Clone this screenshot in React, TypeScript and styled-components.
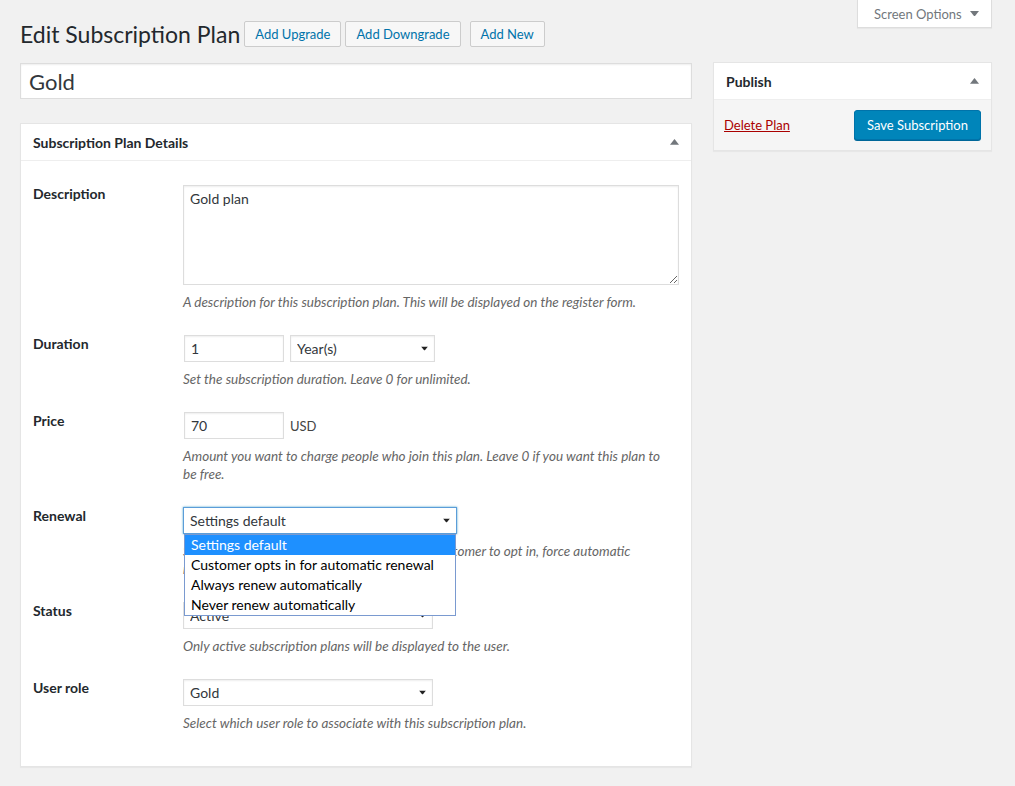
import React from 'react';
import styled, { createGlobalStyle } from 'styled-components';

const GlobalStyle = createGlobalStyle`
  * { box-sizing: border-box; }
  body {
    margin: 0;
    background: #f1f1f1;
    color: #444;
    font-family: Lato, "Liberation Sans", sans-serif;
    font-size: 13px;
  }
`;

const font = `Lato, "Liberation Sans", sans-serif`;

function Caret({ up, color = '#32373c', size = 8 }: { up?: boolean; color?: string; size?: number }) {
  return (
    <svg width={size} height={size * 0.625} viewBox="0 0 8 5" aria-hidden>
      <path d={up ? 'M0 5 L4 0 L8 5 Z' : 'M0 0 L8 0 L4 5 Z'} fill={color} />
    </svg>
  );
}

const Page = styled.div`
  width: 1015px;
  padding: 0 23px 20px 20px;
`;

const TopRow = styled.div`
  display: flex;
  justify-content: space-between;
  align-items: flex-start;
`;

const TitleGroup = styled.div`
  display: flex;
  align-items: center;
  padding-top: 21px;
`;

const PageTitle = styled.h1`
  margin: 0 4px 0 0;
  font-family: ${font};
  font-size: 23px;
  font-weight: 400;
  line-height: 26px;
  color: #23282d;
`;

const TitleAction = styled.button<{ $gap: number }>`
  height: 26px;
  margin-left: ${p => p.$gap}px;
  padding: 0 10px;
  border: 1px solid #ccc;
  border-radius: 2px;
  background: #f7f7f7;
  color: #0073aa;
  font-family: ${font};
  font-size: 13px;
  cursor: pointer;
`;

const ScreenOptions = styled.div`
  display: flex;
  align-items: center;
  gap: 8px;
  width: 135px;
  height: 28px;
  padding-left: 16px;
  background: #fff;
  border: 1px solid #ddd;
  border-top: none;
  box-shadow: 0 1px 1px rgba(0, 0, 0, 0.04);
  color: #72777c;
  font-size: 13px;
`;

const Columns = styled.div`
  display: grid;
  grid-template-columns: 672px 279px;
  column-gap: 21px;
  margin-top: 15px;
  align-items: start;
`;

const MainColumn = styled.div`
  padding-top: 1px;
`;

const TitleInput = styled.input`
  display: block;
  width: 100%;
  height: 36px;
  padding: 2px 8px;
  border: 1px solid #ddd;
  box-shadow: inset 0 1px 2px rgba(0, 0, 0, 0.07);
  background: #fff;
  color: #32373c;
  font-family: ${font};
  font-size: 22px;
  outline: none;
`;

const Postbox = styled.div<{ $top?: number }>`
  margin-top: ${p => p.$top ?? 0}px;
  background: #fff;
  border: 1px solid #e5e5e5;
  box-shadow: 0 1px 1px rgba(0, 0, 0, 0.04);
`;

const PostboxHeader = styled.div`
  display: flex;
  align-items: center;
  justify-content: space-between;
  height: 37px;
  padding: 0 12px;
  border-bottom: 1px solid #eee;
  color: #23282d;
  font-size: 14px;
  font-weight: 700;
`;

const PostboxBody = styled.div`
  padding: 24px 12px 34px;
`;

const FieldRow = styled.div<{ $last?: boolean }>`
  display: grid;
  grid-template-columns: 150px 1fr;
  margin-bottom: ${p => (p.$last ? 0 : 24)}px;
`;

const FieldLabel = styled.label`
  color: #23282d;
  font-size: 14px;
  font-weight: 700;
  line-height: 18px;
`;

const FieldBody = styled.div`
  position: relative;
`;

const Controls = styled.div`
  display: flex;
  align-items: center;
  gap: 6px;
  position: relative;
`;

const Help = styled.p`
  margin: 8px 0 0;
  color: #666;
  font-size: 13.5px;
  font-style: italic;
  line-height: 18px;
`;

const TextArea = styled.textarea`
  display: block;
  width: 100%;
  height: 100px;
  padding: 4px 6px;
  border: 1px solid #ddd;
  box-shadow: inset 0 1px 2px rgba(0, 0, 0, 0.07);
  color: #32373c;
  font-family: ${font};
  font-size: 14px;
  line-height: 18px;
  outline: none;
`;

const TextInput = styled.input<{ $width: number }>`
  width: ${p => p.$width}px;
  height: 27px;
  margin-left: 1px;
  padding: 2px 6px;
  border: 1px solid #ddd;
  box-shadow: inset 0 1px 2px rgba(0, 0, 0, 0.07);
  color: #32373c;
  font-family: ${font};
  font-size: 14px;
  outline: none;
`;

const Unit = styled.span`
  color: #444;
  font-size: 13px;
`;

const SelectWrap = styled.div<{ $width: number }>`
  position: relative;
  width: ${p => p.$width}px;
  height: 27px;
`;

const SelectBox = styled.select<{ $focused?: boolean }>`
  appearance: none;
  width: 100%;
  height: 100%;
  padding: 2px 24px 2px 6px;
  border: 1px solid ${p => (p.$focused ? '#5b9dd9' : '#ddd')};
  box-shadow: ${p => (p.$focused ? '0 0 2px rgba(30, 140, 190, 0.8)' : 'inset 0 1px 2px rgba(0, 0, 0, 0.07)')};
  background: #fff;
  color: #32373c;
  font-family: ${font};
  font-size: 14px;
  outline: none;
`;

const SelectArrow = styled.span`
  position: absolute;
  right: 7px;
  top: 50%;
  transform: translateY(-60%);
  display: flex;
  pointer-events: none;
`;

const OptionList = styled.ul`
  position: absolute;
  top: 100%;
  left: 1px;
  z-index: 2;
  width: 272px;
  margin: 0;
  padding: 0;
  list-style: none;
  background: #fff;
  border: 1px solid #7a9ad0;
`;

const OptionItem = styled.li<{ $active?: boolean }>`
  height: 20px;
  padding: 0 6px;
  line-height: 20px;
  font-size: 14px;
  color: ${p => (p.$active ? '#fff' : '#000')};
  background: ${p => (p.$active ? '#1e90ff' : 'transparent')};
`;

const PublishBody = styled.div`
  display: flex;
  align-items: center;
  justify-content: space-between;
  padding: 10px;
  background: #f5f5f5;
`;

const DeleteLink = styled.a`
  color: #a00;
  font-size: 13px;
  text-decoration: underline;
  cursor: pointer;
`;

const PrimaryButton = styled.button`
  height: 30px;
  padding: 0 12px;
  border: 1px solid #0073aa;
  border-radius: 3px;
  background: #0085ba;
  box-shadow: 0 1px 0 #006799;
  color: #fff;
  font-family: ${font};
  font-size: 13px;
  cursor: pointer;
`;

function Select({ width, value, options, open }: { width: number; value: string; options: string[]; open?: boolean }) {
  return (
    <SelectWrap $width={width}>
      <SelectBox $focused={open} defaultValue={value}>
        {options.map(o => <option key={o}>{o}</option>)}
      </SelectBox>
      <SelectArrow><Caret color="#222" size={7} /></SelectArrow>
      {open && (
        <OptionList>
          {options.map(o => <OptionItem key={o} $active={o === value}>{o}</OptionItem>)}
        </OptionList>
      )}
    </SelectWrap>
  );
}

const renewalOptions = [
  'Settings default',
  'Customer opts in for automatic renewal',
  'Always renew automatically',
  'Never renew automatically',
];

export default function App() {
  return (
    <Page>
      <GlobalStyle />
      <TopRow>
        <TitleGroup>
          <PageTitle>Edit Subscription Plan</PageTitle>
          <TitleAction $gap={0}>Add Upgrade</TitleAction>
          <TitleAction $gap={4}>Add Downgrade</TitleAction>
          <TitleAction $gap={9}>Add New</TitleAction>
        </TitleGroup>
        <ScreenOptions>
          Screen Options <Caret color="#72777c" size={9} />
        </ScreenOptions>
      </TopRow>

      <Columns>
        <MainColumn>
          <TitleInput defaultValue="Gold" />
          <Postbox $top={24}>
            <PostboxHeader>
              Subscription Plan Details
              <Caret up color="#72777c" size={9} />
            </PostboxHeader>
            <PostboxBody>
              <FieldRow>
                <FieldLabel>Description</FieldLabel>
                <FieldBody>
                  <TextArea defaultValue="Gold plan" />
                  <Help>A description for this subscription plan. This will be displayed on the register form.</Help>
                </FieldBody>
              </FieldRow>

              <FieldRow>
                <FieldLabel>Duration</FieldLabel>
                <FieldBody>
                  <Controls>
                    <TextInput $width={100} defaultValue="1" />
                    <Select width={145} value="Year(s)" options={['Day(s)', 'Week(s)', 'Month(s)', 'Year(s)']} />
                  </Controls>
                  <Help>Set the subscription duration. Leave 0 for unlimited.</Help>
                </FieldBody>
              </FieldRow>

              <FieldRow>
                <FieldLabel>Price</FieldLabel>
                <FieldBody>
                  <Controls>
                    <TextInput $width={100} defaultValue="70" />
                    <Unit>USD</Unit>
                  </Controls>
                  <Help>Amount you want to charge people who join this plan. Leave 0 if you want this plan to<br />be free.</Help>
                </FieldBody>
              </FieldRow>

              <FieldRow>
                <FieldLabel>Renewal</FieldLabel>
                <FieldBody>
                  <Controls>
                    <Select width={274} value="Settings default" options={renewalOptions} open />
                  </Controls>
                  <Help>Select renewal type. You can either allow the customer to opt in, force automatic<br />renewal or force no renewal.</Help>
                </FieldBody>
              </FieldRow>

              <FieldRow>
                <FieldLabel>Status</FieldLabel>
                <FieldBody>
                  <Controls>
                    <Select width={250} value="Active" options={['Active', 'Inactive']} />
                  </Controls>
                  <Help>Only active subscription plans will be displayed to the user.</Help>
                </FieldBody>
              </FieldRow>

              <FieldRow $last>
                <FieldLabel>User role</FieldLabel>
                <FieldBody>
                  <Controls>
                    <Select width={250} value="Gold" options={['Subscriber', 'Gold']} />
                  </Controls>
                  <Help>Select which user role to associate with this subscription plan.</Help>
                </FieldBody>
              </FieldRow>
            </PostboxBody>
          </Postbox>
        </MainColumn>

        <Postbox>
          <PostboxHeader>
            Publish
            <Caret up color="#72777c" size={9} />
          </PostboxHeader>
          <PublishBody>
            <DeleteLink>Delete Plan</DeleteLink>
            <PrimaryButton>Save Subscription</PrimaryButton>
          </PublishBody>
        </Postbox>
      </Columns>
    </Page>
  );
}
